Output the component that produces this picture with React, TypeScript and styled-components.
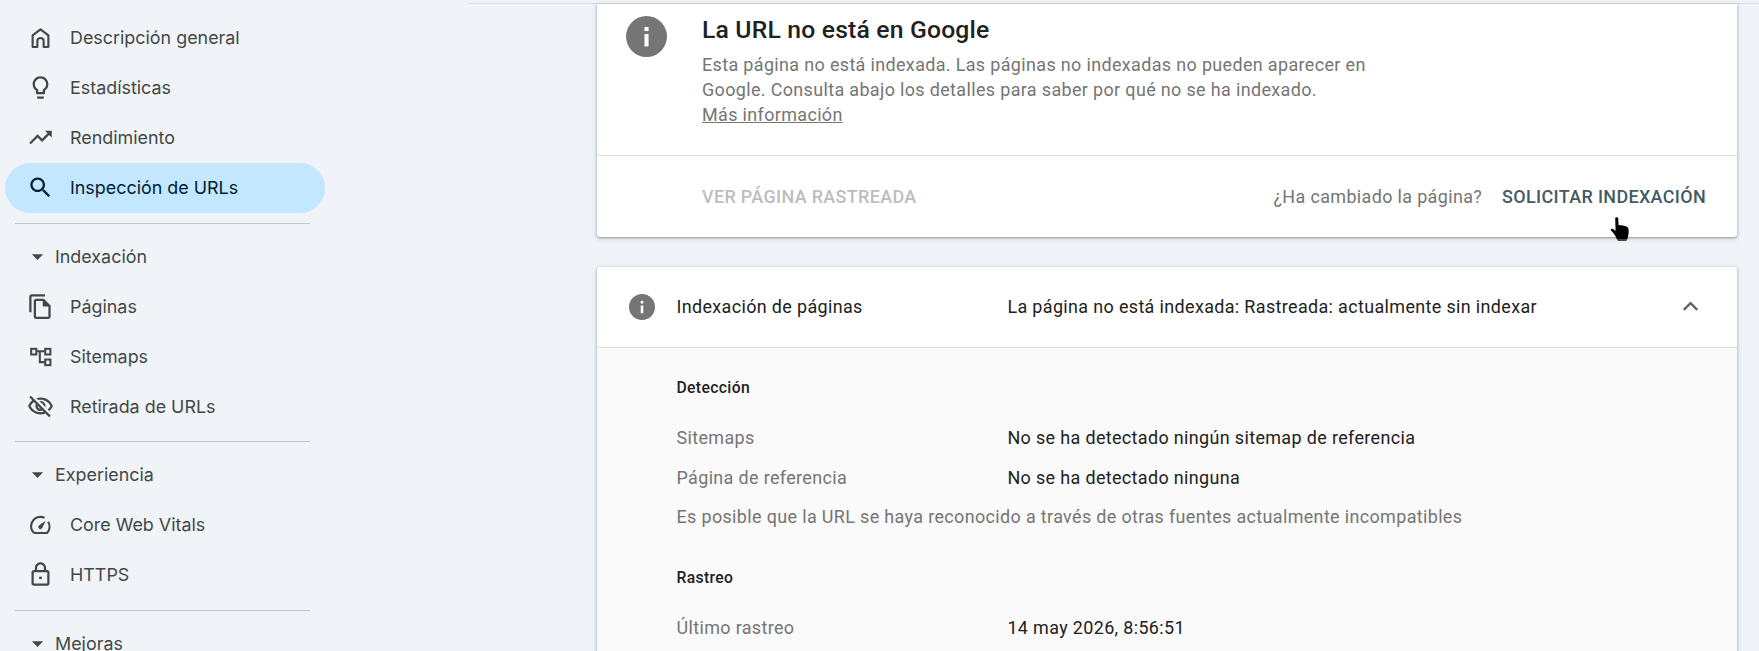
import React from "react";
import styled, { createGlobalStyle } from "styled-components";

const Global = createGlobalStyle`
  html, body { margin: 0; padding: 0; background: #f0f4f9; }
  #root { height: 651px; overflow: hidden; }
`;

const Page = styled.div`
  display: flex;
  width: 1759px;
  height: 651px;
  overflow: hidden;
  background: #f0f4f9;
`;

const Sidebar = styled.nav`
  width: 468px;
  flex: none;
  padding-top: 12.5px;
  box-sizing: border-box;
  font-family: Inter, "Liberation Sans", sans-serif;
  font-size: 17.9px;
  color: #444746;
`;

const NavRow = styled.div<{ $active?: boolean }>`
  display: flex;
  align-items: center;
  gap: 16.5px;
  width: 320px;
  height: 50px;
  margin-left: 5px;
  padding-left: 21.5px;
  box-sizing: border-box;
  border-radius: 25px;
  background: ${(p) => (p.$active ? "#c2e7ff" : "transparent")};
  color: ${(p) => (p.$active ? "#001d35" : "#444746")};
  svg { width: 27px; height: 27px; flex: none; fill: currentColor; }
`;

const SectionRow = styled.div`
  display: flex;
  align-items: center;
  gap: 4px;
  width: 320px;
  height: 50px;
  margin-left: 5px;
  padding-left: 19px;
  box-sizing: border-box;
  svg { width: 27px; height: 27px; flex: none; fill: currentColor; }
`;

const NavDivider = styled.div`
  width: 295px;
  height: 1px;
  margin: 10px 0 7.5px 15px;
  background: #c4c7c5;
`;

const Main = styled.main`
  flex: 1;
  min-width: 0;
  margin-top: 3px;
  border-top: 1px solid #dadce0;
  padding: 0 22px 0 129px;
  font-family: Roboto, "Liberation Sans", sans-serif;
  letter-spacing: 0.36px;
`;

const Card = styled.section`
  background: #fff;
  border-radius: 0 0 3px 3px;
  box-shadow: 0 1px 2px rgba(60, 64, 67, 0.4), 0 1px 4px 1px rgba(60, 64, 67, 0.18);
`;

const DetailCard = styled(Card)`
  margin-top: 30px;
  border-radius: 3px;
`;

const Summary = styled.div`
  display: flex;
  align-items: flex-start;
  gap: 35px;
  height: 152px;
  padding: 10px 0 0 29px;
  box-sizing: border-box;
  border-bottom: 1px solid #e0e0e0;
`;

const BigInfo = styled.svg`
  width: 41px;
  height: 41px;
  margin-top: 1.5px;
  flex: none;
`;

const Title = styled.h1`
  margin: 0;
  font-size: 24.7px;
  line-height: 32px;
  font-weight: 500;
  letter-spacing: 0.19px;
  color: #212121;
`;

const Description = styled.p`
  margin: 5.5px 0 0;
  width: 690px;
  font-size: 17.95px;
  line-height: 25px;
  color: #757575;
  a { color: inherit; text-decoration: underline; }
`;

const Actions = styled.div`
  position: relative;
  display: flex;
  align-items: center;
  height: 81px;
  box-sizing: border-box;
  padding: 0 31px 0 105px;
`;

const ActionLabel = styled.span<{ $disabled?: boolean }>`
  font-size: 17.95px;
  font-weight: 500;
  letter-spacing: 0.35px;
  color: ${(p) => (p.$disabled ? "#bdbdbd" : "#455a64")};
`;

const Question = styled.span`
  margin-left: auto;
  margin-right: 20px;
  font-size: 17.95px;
  color: #757575;
`;

const Cursor = styled.svg`
  position: absolute;
  left: 1013px;
  top: 61px;
  width: 19px;
  height: 24px;
`;

const DetailHeader = styled.div`
  display: grid;
  grid-template-columns: 79.5px 330.9px 1fr 60px;
  align-items: center;
  height: 80px;
  box-sizing: border-box;
  padding-bottom: 1px;
  font-size: 17.95px;
  color: #212121;
`;

const SmallInfo = styled.svg`
  width: 26px;
  height: 26px;
  margin-left: 31.5px;
`;

const Chevron = styled.svg`
  width: 27px;
  height: 27px;
  fill: none;
  stroke: #5f6368;
  stroke-width: 2;
`;

const Details = styled.div`
  border-top: 1px solid #e0e0e0;
  background: #fafafa;
  padding: 28px 0 20px 79.5px;
`;

const GroupTitle = styled.h2<{ $spaced?: boolean }>`
  margin: ${(p) => (p.$spaced ? "29px" : "0")} 0 17px;
  font-size: 15.7px;
  line-height: 24px;
  font-weight: 500;
  color: #212121;
`;

const InfoRow = styled.div`
  display: grid;
  grid-template-columns: 330.9px 1fr;
  align-items: center;
  height: 40px;
  font-size: 17.95px;
  color: #212121;
`;

const Label = styled.span`
  color: #757575;
`;

const Note = styled.div`
  height: 40px;
  line-height: 40px;
  font-size: 17.95px;
  color: #757575;
`;

const icons: Record<string, React.ReactNode> = {
  home: <path d="M5 20.400V10.100L12 4.700l7 5.400v10.300h-4.200v-5.200a2.800 2.800 0 0 0-5.600 0v5.200z" fill="none" stroke="currentColor" strokeWidth="1.9" strokeLinejoin="round" />,
  bulb: <path d="M9 21c0 .55.45 1 1 1h4c.55 0 1-.45 1-1v-1H9v1zm3-19C8.140 2 5 5.140 5 9c0 2.380 1.190 4.470 3 5.740V17c0 .55.45 1 1 1h6c.55 0 1-.45 1-1v-2.260c1.810-1.270 3-3.360 3-5.740 0-3.860-3.140-7-7-7zm2.850 11.100l-.85.6V16h-4v-2.300l-.85-.6C7.800 12.160 7 10.630 7 9c0-2.760 2.240-5 5-5s5 2.240 5 5c0 1.630-.8 3.160-2.150 4.100z" />,
  trend: <path d="M16 6l2.290 2.290-4.880 4.880-4-4L2 16.590 3.410 18l6-6 4 4 6.300-6.290L22 12V6z" />,
  search: <path d="M15.500 14h-.79l-.28-.27C15.410 12.590 16 11.110 16 9.500 16 5.910 13.090 3 9.500 3S3 5.910 3 9.500 5.910 16 9.500 16c1.610 0 3.090-.59 4.230-1.570l.27.28v.79l5 4.990L20.490 19l-4.990-5zm-6 0C7.010 14 5 11.990 5 9.500S7.010 5 9.500 5 14 7.010 14 9.500 11.990 14 9.500 14z" />,
  pages: <path d="M16 1H4c-1.100 0-2 .9-2 2v14h2V3h12V1zm-1 4H8c-1.100 0-1.990.9-1.990 2L6 21c0 1.100.89 2 1.990 2H19c1.100 0 2-.9 2-2V11l-6-6zM8 21V7h6v5h5v9H8z" />,
  sitemap: (
    <g fill="none" stroke="currentColor" strokeWidth="1.8">
      <rect x="3.700" y="5.200" width="4.600" height="5" />
      <rect x="16.200" y="5.200" width="4.600" height="5" />
      <rect x="16.200" y="14.700" width="4.600" height="5" />
      <path d="M8.300 7.400h7.900M11.400 7.400V17h4.800" />
    </g>
  ),
  eyeoff: <path d="M12 6c3.790 0 7.170 2.130 8.820 5.500-.59 1.220-1.420 2.270-2.410 3.120l1.410 1.410c1.390-1.230 2.490-2.770 3.180-4.530C21.270 7.110 17 4 12 4c-1.270 0-2.490.2-3.640.57l1.650 1.650C10.660 6.090 11.320 6 12 6zm-1.070 1.140L13 9.210c.57.25 1.030.71 1.280 1.280l2.070 2.070c.08-.34.14-.7.14-1.070C16.500 9.010 14.480 7 12 7c-.37 0-.72.05-1.070.14zM2.010 3.870l2.680 2.680C3.060 7.830 1.770 9.530 1 11.500 2.730 15.890 7 19 12 19c1.520 0 2.980-.29 4.320-.82l3.420 3.420 1.410-1.410L3.420 2.450 2.010 3.870zm7.500 7.500l2.610 2.610c-.04.01-.08.02-.12.02-1.380 0-2.500-1.120-2.500-2.500 0-.05.01-.08.01-.13zm-3.400-3.400l1.750 1.750c-.23.55-.36 1.150-.36 1.780 0 2.480 2.020 4.500 4.500 4.500.63 0 1.230-.13 1.770-.36l.98.98c-.88.24-1.800.38-2.750.38-3.790 0-7.170-2.130-8.820-5.500.7-1.430 1.720-2.610 2.930-3.530z" />,
  speed: (
    <g>
      <path d="M6.200 19.600A8.400 8.400 0 0 1 12 5.200c1.300 0 2.500.3 3.600.8M18.800 9.500A8.400 8.400 0 0 1 17.800 19.600H6.200" fill="none" stroke="currentColor" strokeWidth="1.900" />
      <path d="M16.600 8.600l-2.900 6.300a1.900 1.900 0 1 1-2.600-2.400z" />
    </g>
  ),
  lock: <path d="M18 8h-1V6c0-2.760-2.240-5-5-5S7 3.240 7 6v2H6c-1.100 0-2 .9-2 2v10c0 1.100.9 2 2 2h12c1.100 0 2-.9 2-2V10c0-1.100-.9-2-2-2zM9 6c0-1.660 1.340-3 3-3s3 1.340 3 3v2H9V6zm9 14H6V10h12v10zm-6-3.700a1.300 1.300 0 1 0 0-2.600 1.300 1.300 0 0 0 0 2.600z" />,
};

const NavIcon = ({ name }: { name: string }) => (
  <svg viewBox="0 0 24 24" aria-hidden="true">{icons[name]}</svg>
);

const Caret = () => (
  <svg viewBox="0 0 24 24" aria-hidden="true"><path d="M7 10l5 5 5-5z" /></svg>
);

const InfoGlyph = () => (
  <>
    <circle cx="12" cy="12" r="12" fill="#757575" />
    <rect x="10.800" y="10.600" width="2.400" height="7.200" fill="#fff" />
    <rect x="10.800" y="6.400" width="2.400" height="2.400" fill="#fff" />
  </>
);

const Nav = ({ icon, label, active }: { icon: string; label: string; active?: boolean }) => (
  <NavRow $active={active}>
    <NavIcon name={icon} />
    <span>{label}</span>
  </NavRow>
);

const Section = ({ label }: { label: string }) => (
  <SectionRow>
    <Caret />
    <span>{label}</span>
  </SectionRow>
);

export default function App() {
  return (
    <Page>
      <Global />
      <Sidebar>
        <Nav icon="home" label="Descripción general" />
        <Nav icon="bulb" label="Estadísticas" />
        <Nav icon="trend" label="Rendimiento" />
        <Nav icon="search" label="Inspección de URLs" active />
        <NavDivider />
        <Section label="Indexación" />
        <Nav icon="pages" label="Páginas" />
        <Nav icon="sitemap" label="Sitemaps" />
        <Nav icon="eyeoff" label="Retirada de URLs" />
        <NavDivider />
        <Section label="Experiencia" />
        <Nav icon="speed" label="Core Web Vitals" />
        <Nav icon="lock" label="HTTPS" />
        <NavDivider />
        <Section label="Mejoras" />
      </Sidebar>
      <Main>
        <Card>
          <Summary>
            <BigInfo viewBox="0 0 24 24" aria-hidden="true"><InfoGlyph /></BigInfo>
            <div>
              <Title>La URL no está en Google</Title>
              <Description>
                Esta página no está indexada. Las páginas no indexadas no pueden aparecer en Google. Consulta abajo los detalles para saber por qué no se ha indexado.
                <br />
                <a href="#mas">Más información</a>
              </Description>
            </div>
          </Summary>
          <Actions>
            <ActionLabel $disabled>VER PÁGINA RASTREADA</ActionLabel>
            <Question>¿Ha cambiado la página?</Question>
            <ActionLabel>SOLICITAR INDEXACIÓN</ActionLabel>
            <Cursor viewBox="0 0 19 24" aria-hidden="true">
              <path d="M5.200 1.200C5.200-.2 8-.2 8.200 1.200L8.600 8c3.400.3 8.600.9 9.600 3 .9 2 .5 6.800-.7 10.500L17 22.500H7l-1-2.200C5 17.500 3 15.500 1 13.400c-.6-1.200.8-2 2-1.300l2.600 1.600z" fill="#000" />
              <path d="M7 22h10l-.6 2H8z" fill="#444" />
            </Cursor>
          </Actions>
        </Card>
        <DetailCard>
          <DetailHeader>
            <SmallInfo viewBox="0 0 24 24" aria-hidden="true"><InfoGlyph /></SmallInfo>
            <span>Indexación de páginas</span>
            <span>La página no está indexada: Rastreada: actualmente sin indexar</span>
            <Chevron viewBox="0 0 24 24" aria-hidden="true"><path d="M6 15l6-6 6 6" /></Chevron>
          </DetailHeader>
          <Details>
            <GroupTitle>Detección</GroupTitle>
            <InfoRow><Label>Sitemaps</Label><span>No se ha detectado ningún sitemap de referencia</span></InfoRow>
            <InfoRow><Label>Página de referencia</Label><span>No se ha detectado ninguna</span></InfoRow>
            <Note>Es posible que la URL se haya reconocido a través de otras fuentes actualmente incompatibles</Note>
            <GroupTitle $spaced>Rastreo</GroupTitle>
            <InfoRow><Label>Último rastreo</Label><span>14 may 2026, 8:56:51</span></InfoRow>
          </Details>
        </DetailCard>
      </Main>
    </Page>
  );
}
